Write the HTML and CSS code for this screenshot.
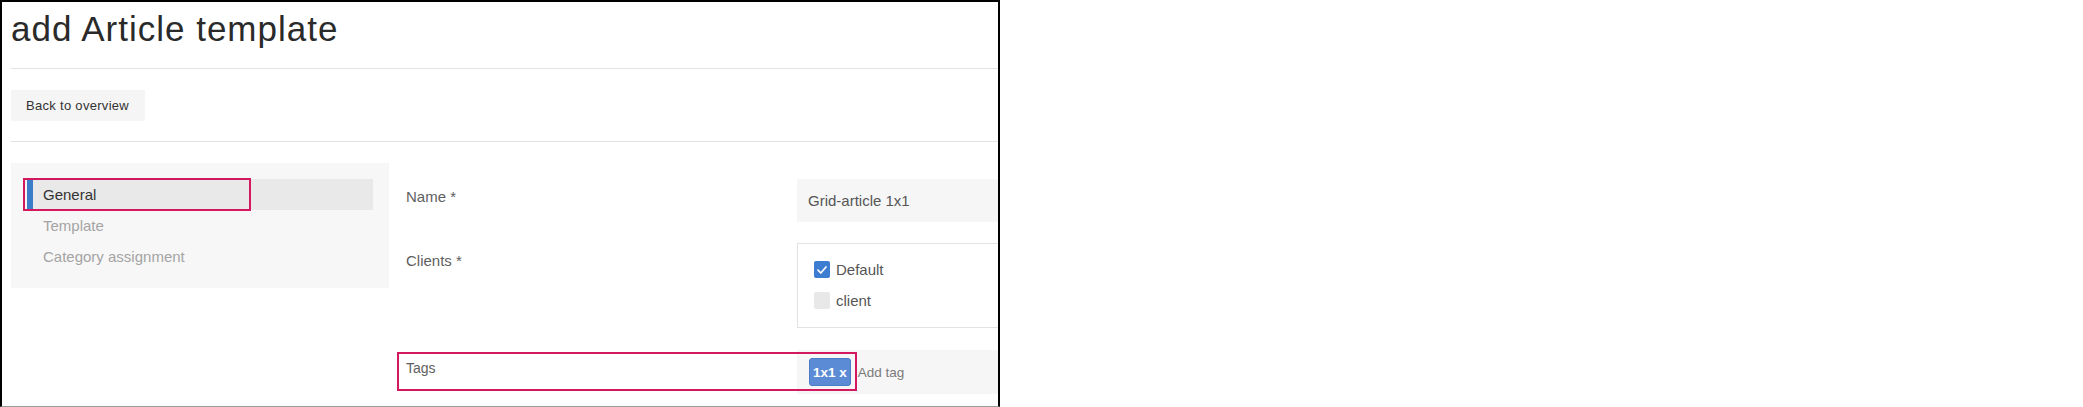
FILE: index.html
```html
<!DOCTYPE html>
<html>
<head>
<meta charset="utf-8">
<link rel="stylesheet" href="styles.css">
</head>
<body>
<div class="frame">
  <header class="page-head">
    <h1 class="title">add Article template</h1>
  </header>
  <div class="toolbar">
    <button class="btn">Back to overview</button>
  </div>
  <div class="main">
    <nav class="sidebar">
      <div class="nav-item active">General<span class="mark mark-nav"></span></div>
      <div class="nav-item">Template</div>
      <div class="nav-item">Category assignment</div>
    </nav>
    <div class="form">
      <div class="row">
        <div class="label">Name *</div>
        <div class="field input">Grid-article 1x1</div>
      </div>
      <div class="row">
        <div class="label">Clients *</div>
        <div class="field checks">
          <div class="check-row"><span class="box on"><svg width="12" height="12" viewBox="0 0 12 12"><path d="M2 6.2 L4.8 9 L10 3" fill="none" stroke="#fff" stroke-width="1.7" stroke-linecap="round" stroke-linejoin="round"/></svg></span>Default</div>
          <div class="check-row"><span class="box"></span>client</div>
        </div>
      </div>
      <div class="row tags-row">
        <div class="label small">Tags</div>
        <div class="field input tags">
          <span class="chip">1x1 x</span>
          <span class="add">Add tag</span>
        </div>
        <span class="mark mark-tags"></span>
      </div>
    </div>
  </div>
</div>
</body>
</html>
```
FILE: styles.css
```css
html, body {
  margin: 0;
  padding: 0;
  background: #fff;
}
body {
  font-family: "Liberation Sans", Arial, sans-serif;
  color: #333;
}
.frame {
  position: relative;
  width: 1000px;
  height: 407px;
  box-sizing: border-box;
  border: 2px solid #000;
  border-bottom: 1px solid #9a9a9a;
  padding-left: 9px;
  overflow: hidden;
}
.page-head {
  padding: 7px 0 19px 0;
  border-bottom: 1px solid #e2e2e2;
}
.title {
  margin: 0;
  font-size: 35px;
  line-height: 40px;
  font-weight: normal;
  letter-spacing: 1px;
  color: #2a2a2a;
}
.toolbar {
  padding: 21px 0 20px 0;
  border-bottom: 1px solid #e2e2e2;
}
.btn {
  display: block;
  width: 134px;
  height: 31px;
  border: 0;
  margin: 0;
  padding: 0 0 0 15px;
  text-align: left;
  background: #f5f5f5;
  font-family: "Liberation Sans", Arial, sans-serif;
  font-size: 13px;
  letter-spacing: 0.3px;
  color: #333;
}
.main {
  display: flex;
  align-items: flex-start;
  gap: 8px;
  padding-top: 21px;
}
.sidebar {
  flex: 0 0 378px;
  box-sizing: border-box;
  background: #f7f7f7;
  padding: 16px;
}
.nav-item {
  position: relative;
  height: 31px;
  line-height: 31px;
  padding-left: 16px;
  font-size: 15px;
  color: #a4a4a4;
}
.nav-item.active {
  height: 31px;
  line-height: 31px;
  padding-left: 10px;
  border-left: 6px solid #3d7cc9;
  background: #e9e9e9;
  color: #333;
}
.mark {
  position: absolute;
  box-sizing: border-box;
  border: 2px solid #d3185f;
  pointer-events: none;
}
.mark-nav {
  left: -10px;
  top: -1px;
  width: 228px;
  height: 33px;
}
.form {
  display: flex;
  flex-direction: column;
  gap: 21px;
  padding-top: 16px;
}
.row {
  position: relative;
  display: flex;
}
.label {
  flex: 0 0 400px;
  box-sizing: border-box;
  padding: 8px 0 0 9px;
  font-size: 15px;
  line-height: 20px;
  color: #606060;
}
.label.small {
  font-size: 14px;
  padding-top: 8px;
}
.field {
  width: 420px;
  flex: 0 0 420px;
  box-sizing: border-box;
}
.input {
  height: 43px;
  display: flex;
  align-items: center;
  padding-left: 11px;
  background: #f6f6f6;
  font-size: 15px;
  color: #555;
}
.checks {
  border: 1px solid #e2e2e2;
  padding: 10px 16px 11px 16px;
}
.check-row {
  display: flex;
  align-items: center;
  height: 31px;
  font-size: 15px;
  color: #555;
}
.box {
  width: 16px;
  height: 17px;
  margin-right: 6px;
  border-radius: 2px;
  background: #e8e8e8;
  display: flex;
  align-items: center;
  justify-content: center;
}
.box.on {
  background: #3d7dd1;
}
.tags-row {
  margin-top: 1px;
}
.tags {
  height: 44px;
  padding-left: 12px;
}
.chip {
  height: 28px;
  box-sizing: border-box;
  padding: 0 3px;
  display: flex;
  align-items: center;
  background: #5b8bd4;
  border: 1px solid #4a7bc6;
  border-radius: 3px;
  color: #fff;
  font-weight: bold;
  font-size: 13.5px;
}
.add {
  margin-left: 7px;
  font-size: 13.5px;
  color: #7a7a7a;
}
.mark-tags {
  left: 0;
  top: 2px;
  width: 460px;
  height: 39px;
}
```
